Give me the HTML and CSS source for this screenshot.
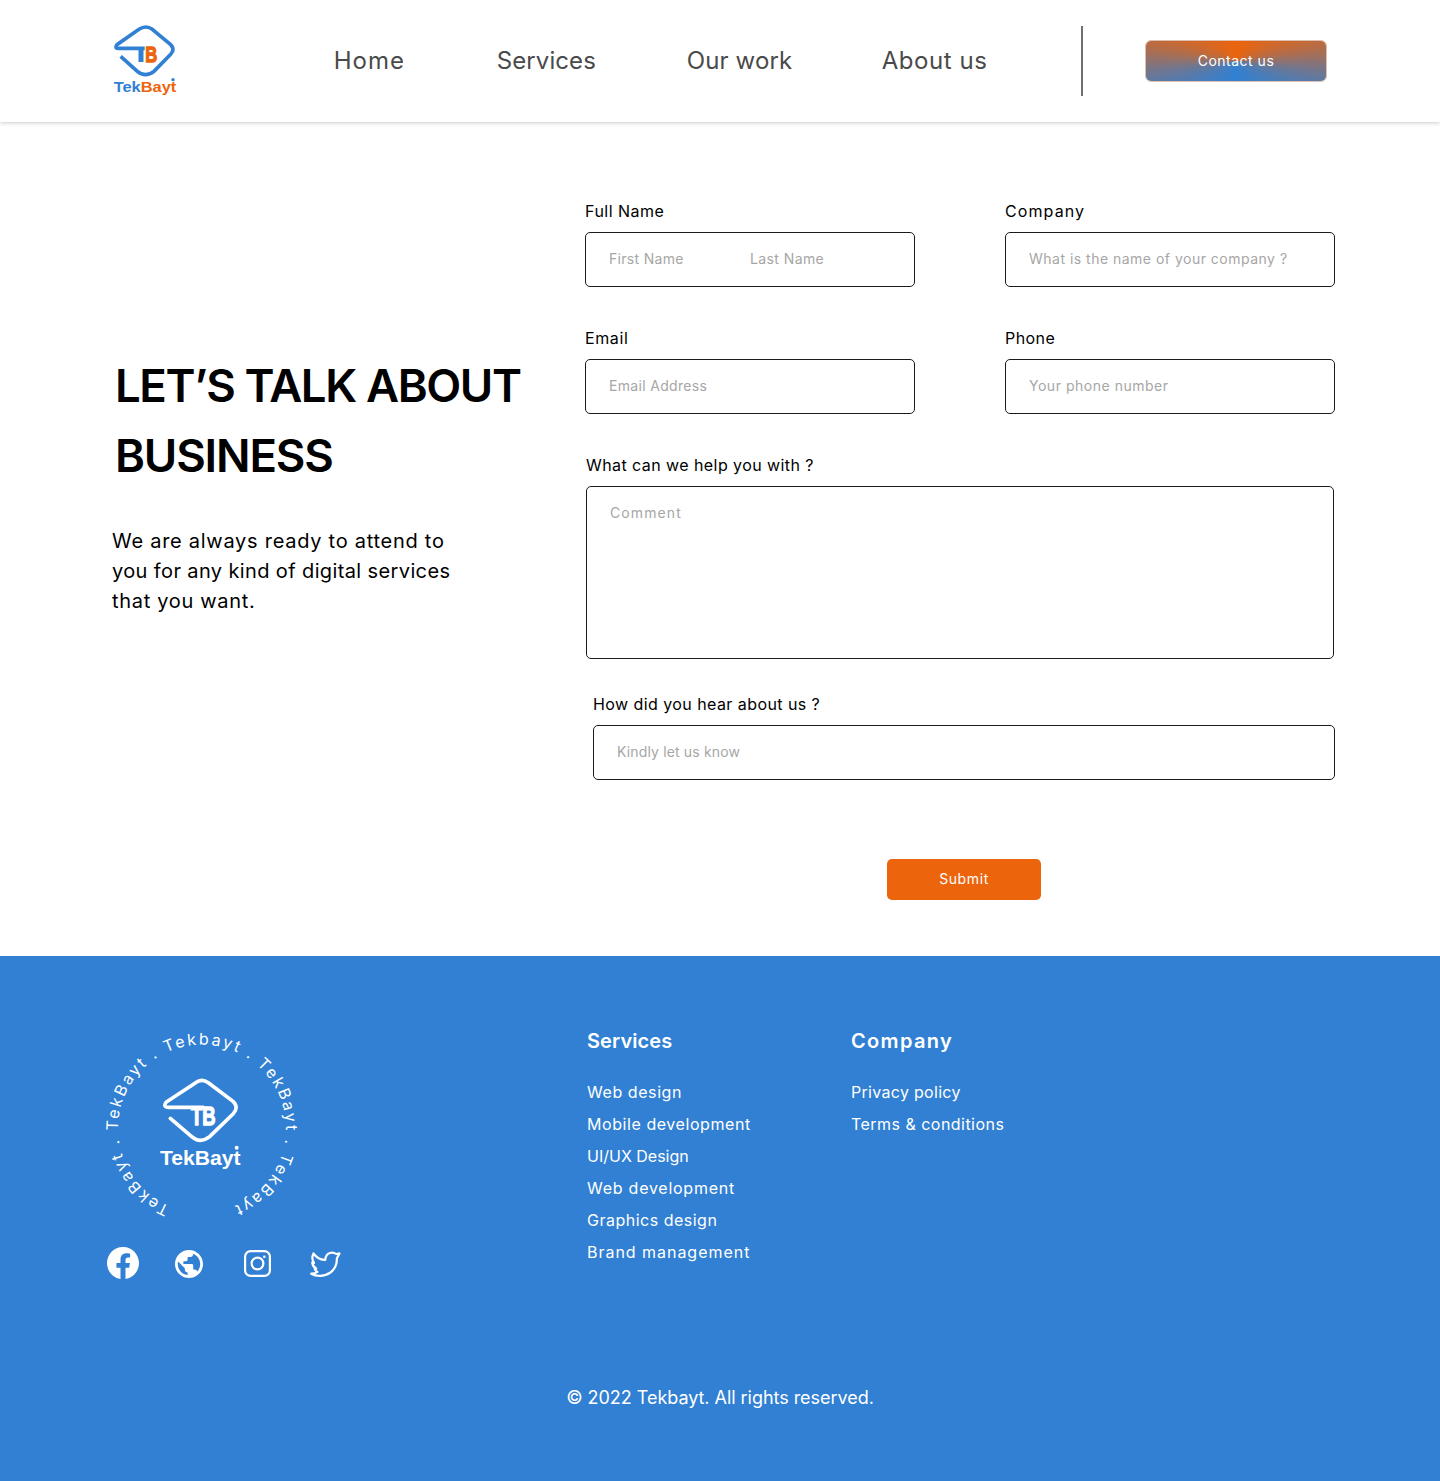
FILE: index.html
```html
<!DOCTYPE html>
<html lang="en">
<head>
<meta charset="utf-8">
<title>TekBayt – Contact us</title>
<link rel="stylesheet" href="styles.css">
</head>
<body>
<header class="header">
  <svg class="logo" viewBox="0 0 270 270" role="img" aria-label="TekBayt">
    <path class="logo-line" d="M62 124L112 169Q136 189 162 169L212 118Q226 103 212 89L157 43Q138 29 117 43L51 89Q42 101 56 100H134"/>
    <path class="logo-stem" d="M123 99V141"/>
    <text class="logo-b" x="136" y="140" textLength="36" lengthAdjust="spacingAndGlyphs">B</text>
    <text class="logo-word" x="41" y="232" textLength="188" lengthAdjust="spacingAndGlyphs">Tek<tspan class="logo-accent">Bayt</tspan></text>
    <circle class="logo-dot" cx="219" cy="194" r="5"/>
  </svg>
  <nav class="nav">
    <a class="n1">Home</a><a class="n2">Services</a><a class="n3">Our work</a><a class="n4">About us</a>
  </nav>
  <span class="divider"></span>
  <a class="contact-btn">Contact us</a>
</header>
<main class="main">
  <section class="intro">
    <h1><span class="h-a">LET’S TALK ABOUT</span><br><span class="h-b">BUSINESS</span></h1>
    <p><span class="p-a">We are always ready to attend to</span><br><span class="p-b">you for any kind of digital services</span><br><span class="p-c">that you want.</span></p>
  </section>
  <form class="form">
    <div class="row">
      <div class="field"><label class="l1">Full Name</label><div class="input split"><span class="i1">First Name</span><span class="i2">Last Name</span></div></div>
      <div class="field"><label class="l2">Company</label><div class="input"><span class="i3">What is the name of your company ?</span></div></div>
    </div>
    <div class="row">
      <div class="field"><label class="l3">Email</label><div class="input"><span class="i4">Email Address</span></div></div>
      <div class="field"><label class="l4">Phone</label><div class="input"><span class="i5">Your phone number</span></div></div>
    </div>
    <div class="field comment"><label class="l5">What can we help you with ?</label><div class="input area"><span class="i6">Comment</span></div></div>
    <div class="field hear"><label class="l6">How did you hear about us ?</label><div class="input"><span class="i7">Kindly let us know</span></div></div>
    <div class="submit">Submit</div>
  </form>
</main>
<footer class="footer">
  <div class="footer-top">
    <div class="brand">
      <svg class="badge" viewBox="0 0 220 205" role="img" aria-label="TekBayt">
        <path id="ring" fill="none" d="M75 186.300A84 84 0 1 1 133 188.500"/>
        <text class="ring-text"><textPath href="#ring">TekBayt . TekBayt . Tekbayt . TekBayt . TekBayt</textPath></text>
        <g transform="scale(.33333)">
          <path class="badge-line" d="M226 295L290 350Q316 372 344 350L414 282Q433 262 414 244L340 188Q320 174 302 188L214 246Q202 262 222 262H325"/>
          <text class="badge-tb" x="288" y="314" textLength="74" lengthAdjust="spacingAndGlyphs">TB</text>
          <text class="badge-word" x="195" y="434" textLength="242" lengthAdjust="spacingAndGlyphs">TekBayt</text>
          <circle cx="425" cy="383" r="6" fill="#fff"/>
        </g>
      </svg>
      <div class="social">
        <svg class="fb" viewBox="0 0 16 16"><path fill="#fff" d="M16 8.049c0-4.446-3.582-8.05-8-8.05C3.58 0 0 3.603 0 8.05c0 4.017 2.926 7.347 6.75 7.951v-5.625H4.72V8.05h2.03V6.275c0-2.017 1.195-3.131 3.022-3.131.876 0 1.791.157 1.791.157v1.98h-1.009c-.993 0-1.303.621-1.303 1.258v1.51h2.218l-.354 2.326H9.25V16C13.074 15.396 16 12.066 16 8.049"/></svg>
        <svg class="globe" viewBox="2 2 20 20"><path fill="#fff" d="M12 2C6.48 2 2 6.48 2 12s4.480 10 10 10 10-4.480 10-10S17.520 2 12 2zm-1 17.930c-3.950-.49-7-3.850-7-7.930 0-.62.08-1.210.21-1.790L9 15v1c0 1.100.9 2 2 2v1.930zm6.900-2.540c-.26-.81-1-1.390-1.900-1.390h-1v-3c0-.55-.45-1-1-1H8v-2h2c.55 0 1-.45 1-1V7h2c1.100 0 2-.9 2-2v-.41c2.930 1.190 5 4.060 5 7.410 0 2.080-.8 3.970-2.100 5.390z"/></svg>
        <svg class="ig" viewBox="0 0 27 27" fill="none" stroke="#fff" stroke-width="2.2"><rect x="1.1" y="1.1" width="24.800" height="24.800" rx="5.5"/><circle cx="13.5" cy="13.5" r="5.9"/><circle cx="20.3" cy="6.7" r="1.3" fill="#fff" stroke="none"/></svg>
        <svg class="tw" viewBox="0 0 31 26" fill="none" stroke="#fff" stroke-width="2.2" stroke-linejoin="round" stroke-linecap="round"><path d="M29.500 2.400L26.200 3C23 .5 16 1 15.200 8.800C10.500 9.200 6.500 6.500 3.500 2.500C1.800 6 2.200 9.500 4 12L2.200 11.500C2.600 14.500 4 16.500 6.200 17.500L4.800 17.900C5.300 19.300 6.200 20.300 7.500 20.900C5.800 22 3.500 22.600 1.200 22.700C6 25.500 14 26 20.500 21.500C25.200 18 27 13 26.900 7.300Z"/></svg>
      </div>
    </div>
    <div class="col services">
      <h2 class="f1">Services</h2>
      <a class="s1">Web design</a><a class="s2">Mobile development</a><a class="s3">UI/UX Design</a><a class="s4">Web development</a><a class="s5">Graphics design</a><a class="s6">Brand management</a>
    </div>
    <div class="col">
      <h2 class="f2">Company</h2>
      <a class="s7">Privacy policy</a><a class="s8">Terms &amp; conditions</a>
    </div>
  </div>
  <p class="copyright">© 2022 Tekbayt. All rights reserved.</p>
</footer>
</body>
</html>
```

FILE: styles.css
```css
* { box-sizing: border-box; }
body { margin: 0; background: #fff; color: #000; font-family: Inter, sans-serif; font-size: 16px; }
h1, h2, p { margin: 0; }
label, .nav a, .input span, .col a { white-space: nowrap; }

.header { height: 122px; display: flex; align-items: center; box-shadow: 0 1px 4px rgba(0,0,0,.2); }
.logo { width: 90px; height: 90px; margin: -2px 0 0 100px; flex: none; }
.logo-line { fill: none; stroke: #3180d3; stroke-width: 11; }
.logo-stem { fill: none; stroke: #3180d3; stroke-width: 15; }
.logo-b { font: bold 68px "Liberation Sans", sans-serif; fill: #ec640c; stroke: #ec640c; stroke-width: 4; }
.logo-word { font: bold 46px "Liberation Sans", sans-serif; fill: #3180d3; }
.logo-accent { fill: #ec640c; }
.logo-dot { fill: #3180d3; }
.nav { width: 891px; padding-left: 143.7px; display: grid; grid-template-columns: 163px 190px 195px 1fr; font-size: 24px; line-height: 36px; color: #4a4a4a; }
.n1 { letter-spacing: 1px; }
.n2 { letter-spacing: .1px; }
.n3 { letter-spacing: .15px; }
.n4 { letter-spacing: .55px; }
.divider { width: 2px; height: 70px; background: #707070; }
.contact-btn { position: relative; z-index: 0; overflow: hidden; margin-left: 62px; width: 182px; height: 42px; border: 1px solid rgba(190,130,100,.5); border-radius: 6px; color: #fff; font-size: 14px; letter-spacing: .5px; line-height: 39px; text-align: center; }
/* square conic gradient stretched to the button's proportions */
.contact-btn::before { content: ""; position: absolute; z-index: -1; top: -1px; left: 69px; width: 42px; height: 42px; background: conic-gradient(#ec640c, #3180d3 180deg, #ec640c); transform: scaleX(4.34); }

.main { height: 834px; display: flex; }
.intro { width: 585px; padding: 229px 0 0 112px; flex: none; }
.intro h1 { margin-left: 3px; font-size: 45.5px; line-height: 70px; font-weight: 600; white-space: nowrap; }
.h-a { letter-spacing: -1.38px; }
.h-b { letter-spacing: -1.15px; }
.intro p { margin-top: 35px; font-size: 20px; line-height: 30px; white-space: nowrap; }
.p-a { letter-spacing: .73px; }
.p-b { letter-spacing: .38px; }
.p-c { letter-spacing: .69px; }
.form { width: 750px; padding-top: 77px; }
.row { display: flex; justify-content: space-between; margin-bottom: 39px; }
.row .field { width: 330px; }
.field label { display: block; height: 24px; line-height: 24px; margin-bottom: 9px; }
.l1 { letter-spacing: .48px; }
.l2 { letter-spacing: 1.1px; }
.l3 { letter-spacing: .6px; }
.l4 { letter-spacing: .45px; }
.l5 { letter-spacing: .43px; }
.l6 { letter-spacing: .43px; }
.input { height: 55px; padding: 0 23px 2px; border: 1px solid #1b1b1b; border-radius: 5px; display: flex; align-items: center; color: #a6a6a6; font-size: 14px; line-height: 20px; }
.split span { width: 141.5px; }
.i1 { letter-spacing: .3px; }
.i2 { letter-spacing: .4px; }
.i3 { letter-spacing: .49px; }
.i4 { letter-spacing: .32px; }
.i5 { letter-spacing: .52px; }
.i6 { letter-spacing: 1.1px; }
.i7 { letter-spacing: .15px; }
.comment { margin: 0 1px; }
.area { height: 173px; align-items: flex-start; padding-top: 16px; }
.hear { margin: 33px 0 0 8px; }
.submit { width: 154px; height: 41px; margin: 79px 0 0 302px; border-radius: 5px; background: #ec640c; color: #fff; font-size: 14px; letter-spacing: .6px; line-height: 39px; text-align: center; }

.footer { height: 525px; background: #3180d3; color: #fff; }
.footer-top { height: 424px; display: flex; }
.brand { width: 587px; padding: 64px 0 0 95px; }
.badge { display: block; width: 220px; height: 205px; }
.ring-text { font-size: 16px; letter-spacing: 2.22px; fill: #fff; }
.badge-line { fill: none; stroke: #fff; stroke-width: 11; stroke-linecap: round; }
.badge-tb { font: bold 78px "Liberation Sans", sans-serif; fill: #fff; stroke: #fff; stroke-width: 4; }
.badge-word { font: bold 62px "Liberation Sans", sans-serif; fill: #fff; }
.social { display: flex; align-items: center; height: 32px; margin: 22px 0 0 12px; }
.fb { width: 32px; height: 32px; }
.globe { width: 28px; height: 28px; margin: 2px 0 0 36px; }
.ig { width: 27px; height: 27px; margin: 1px 0 0 41px; }
.tw { width: 31px; height: 26px; margin: 2px 0 0 39px; }
.col { width: 264px; padding-top: 70px; display: flex; flex-direction: column; line-height: 32px; }
.col h2 { font-size: 20px; line-height: 30px; font-weight: 600; margin-bottom: 20px; }
.f1 { letter-spacing: .1px; }
.f2 { letter-spacing: 1.35px; }
.s1, .s2 { letter-spacing: .57px; }
.s4 { letter-spacing: .75px; }
.s5 { letter-spacing: .5px; }
.s6 { letter-spacing: .97px; }
.s7 { letter-spacing: .3px; }
.s8 { letter-spacing: .47px; }
.copyright { text-align: center; font-size: 18px; letter-spacing: -.04px; line-height: 36px; }
```
